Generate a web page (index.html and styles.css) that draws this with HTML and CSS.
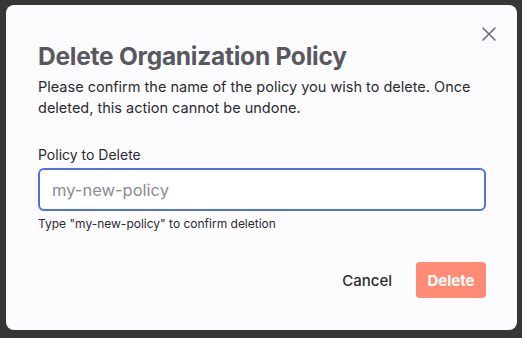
FILE: index.html
```html
<!DOCTYPE html>
<html lang="en">
<head>
    <meta charset="UTF-8">
    <meta name="viewport" content="width=device-width, initial-scale=1.0">
    <title>Delete Organization Policy</title>
    <link rel="stylesheet" href="styles.css">
</head>
<body>
    <div class="overlay">
        <div class="modal">
            <button class="close" aria-label="Close">
                <svg width="16" height="16" viewBox="0 0 16 16" fill="none" stroke="currentColor" stroke-width="1.6" stroke-linecap="round">
                    <path d="M2 2L14 14M14 2L2 14"/>
                </svg>
            </button>
            <h1 class="title">Delete Organization Policy</h1>
            <p class="desc">Please confirm the name of the policy you wish to delete. Once deleted, this action cannot be undone.</p>

            <div class="field">
                <label class="label" for="policyName">Policy to Delete</label>
                <input id="policyName" class="input" type="text" placeholder="my-new-policy">
                <div class="hint">Type "my-new-policy" to confirm deletion</div>
            </div>

            <div class="actions">
                <button class="btn-cancel">Cancel</button>
                <button class="btn-delete">Delete</button>
            </div>
        </div>
    </div>
</body>
</html>
```

FILE: styles.css
```css
body {
    margin: 0;
    background: #373737;
    font-family: Inter, 'Noto Sans', sans-serif;
}
.overlay {
    padding: 5px 5px 8px 6px;
}
.modal {
    position: relative;
    background: #fcfcfe;
    border-radius: 8px;
    padding: 35px 31px 32px 32px;
    height: 258px;
}
.close {
    position: absolute;
    top: 21px;
    right: 20px;
    background: none;
    border: none;
    padding: 0;
    color: #6b6b70;
    cursor: pointer;
}
.title {
    margin: 0;
    font-size: 24.5px;
    font-weight: 700;
    color: #58585e;
    letter-spacing: -0.25px;
    line-height: 32px;
}
.desc {
    margin: 4px 0 0;
    font-size: 14.5px;
    line-height: 21px;
    color: #2b2b30;
}
.field {
    margin-top: 28px;
}
.label {
    display: block;
    font-size: 14px;
    line-height: 18px;
    color: #2b2b30;
}
.input {
    display: block;
    box-sizing: border-box;
    width: 100%;
    height: 43px;
    margin-top: 4px;
    padding: 0 12px;
    border: 2px solid #4f72e0;
    border-radius: 6px;
    font-family: inherit;
    font-size: 16.5px;
    color: #2b2b30;
    background: #fff;
    outline: none;
}
.input::placeholder {
    color: #8b8b92;
}
.hint {
    margin-top: 5px;
    font-size: 12px;
    color: #2b2b30;
}
.actions {
    display: flex;
    justify-content: flex-end;
    align-items: center;
    gap: 24px;
    margin-top: 31px;
}
.btn-cancel {
    background: none;
    border: none;
    padding: 0;
    font-family: inherit;
    font-size: 15px;
    font-weight: 500;
    color: #2b2b30;
    cursor: pointer;
}
.btn-delete {
    width: 70px;
    height: 36px;
    background: #ff8a76;
    border: none;
    border-radius: 4px;
    font-family: inherit;
    font-size: 15px;
    font-weight: 700;
    color: #fff;
    cursor: pointer;
}
```
